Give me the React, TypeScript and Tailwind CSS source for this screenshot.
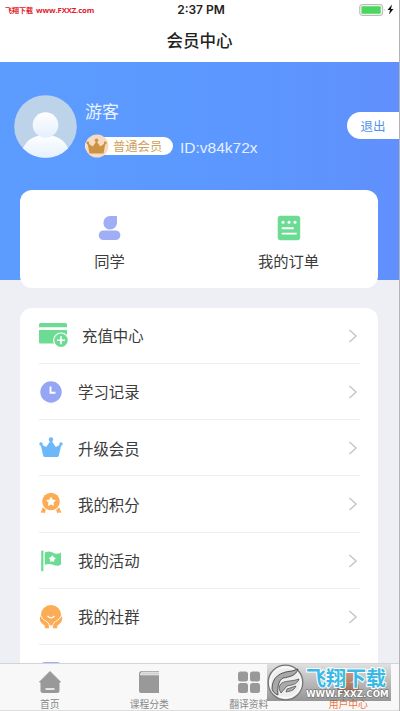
import type { ReactNode } from 'react';

interface MenuItem {
  label: string;
  icon: ReactNode;
  wide?: boolean;
}

interface Tab {
  label: string;
  icon: ReactNode;
  active?: boolean;
}

const menuItems: MenuItem[] = [
  {
    label: '充值中心',
    wide: true,
    icon: (
      <svg className="-mt-[2px]" width="30" height="26" viewBox="0 0 30 26">
        <path d="M1.5 1H26.500a1.500 1.500 0 0 1 1.500 1.500V5.200H0V2.500A1.500 1.500 0 0 1 1.500 1Z" fill="#6cdc94" />
        <path d="M0 8H28V20a1.500 1.500 0 0 1-1.500 1.500H1.500A1.500 1.500 0 0 1 0 20Z" fill="#6cdc94" />
        <circle cx="22" cy="18.300" r="7.900" fill="#fff" />
        <circle cx="22" cy="18.300" r="6.700" fill="#6cdc94" />
        <path d="M22 14.300V22.300M18 18.300H26" stroke="#fff" strokeWidth="1.600" />
      </svg>
    ),
  },
  {
    label: '学习记录',
    icon: (
      <svg width="24" height="24" viewBox="0 0 24 24">
        <circle cx="12" cy="12" r="10.700" fill="#94a6f4" />
        <path d="M11.500 6.500V12.700H16.500" fill="none" stroke="#fff" strokeWidth="1.900" />
      </svg>
    ),
  },
  {
    label: '升级会员',
    icon: (
      <svg width="24" height="24" viewBox="0 0 24 24" fill="#6cb8fb">
        <path d="M1.500 8 7.200 11 12 4 16.800 11 22.500 8 19.800 19.800Q19.500 21 18 21H6Q4.500 21 4.200 19.800Z" />
        <circle cx="12" cy="3.500" r="2.200" />
        <circle cx="2" cy="8" r="1.700" />
        <circle cx="22" cy="8" r="1.700" />
      </svg>
    ),
  },
  {
    label: '我的积分',
    icon: (
      <svg width="24" height="24" viewBox="0 0 24 24">
        <circle cx="12" cy="9.500" r="8.800" fill="#fbac55" />
        <path d="m12 4.700 1.600 2.900 3.300.6-2.300 2.400.4 3.300-3-1.400-3 1.400.4-3.300-2.300-2.400 3.300-.6Z" fill="#fff" />
        <path d="M3.800 15.200 6.900 18 5.600 21.600 4.300 20.400 1.600 20.800ZM20.200 15.200 17.100 18 18.400 21.600 19.700 20.400 22.400 20.800Z" fill="#fbac55" />
      </svg>
    ),
  },
  {
    label: '我的活动',
    icon: (
      <svg width="24" height="24" viewBox="0 0 24 24">
        <path d="M2.200 1.600H4.400V22.200H2.200Z" fill="#6cdc94" />
        <path d="M5.800 3.600C10 1.500 12.500 3 15 4.200 17.500 5.200 20 4.600 22 3.400V15.600C19 17.600 16.500 16.800 14 15.700 11 14.600 8.500 14.700 5.800 16Z" fill="#6cdc94" />
        <path d="m13.500 6.300 1.200 1.900 2.100.9-1.600 1.600v2.200l-2-.6-2.200.5.200-2.200-1.300-1.700 2.100-.8Z" fill="#fff" />
      </svg>
    ),
  },
  {
    label: '我的社群',
    icon: (
      <svg className="shrink-0" width="26" height="26" viewBox="0 0 26 26">
        <circle cx="13" cy="11.300" r="10.200" fill="#fbac55" />
        <path
          d="M3.500 11.500C1 13 1.500 16.500 3.500 19L6.800 21.700V24.200H11.300V21C11.300 18.500 8.500 16.500 6.500 15.500ZM22.500 11.500C25 13 24.500 16.500 22.500 19L19.200 21.700V24.200H14.700V21C14.700 18.500 17.500 16.500 19.500 15.500Z"
          fill="#fbac55"
        />
        <path d="M2.800 11.300C3.500 14.500 6 16 8.500 17.500 10.800 19 11.600 21 11.500 24.500M23.200 11.300C22.500 14.500 20 16 17.500 17.500 15.200 19 14.400 21 14.500 24.500" fill="none" stroke="#fff" strokeWidth=".9" />
        <path d="M9.500 12Q13 15.800 16.500 12" fill="none" stroke="#fff" strokeWidth="1.300" />
      </svg>
    ),
  },
];

const tabs: Tab[] = [
  {
    label: '首页',
    icon: (
      <svg width="24" height="24" viewBox="0 0 24 24">
        <path d="M12 1.500 22.500 12H21V21Q21 22.500 19.500 22.500H4.500Q3 22.500 3 21V12H1.500Z" fill="#999" stroke="#999" strokeLinejoin="round" />
        <path d="M7.500 19H16.500" stroke="#f8f8f8" strokeWidth="1.600" />
      </svg>
    ),
  },
  {
    label: '课程分类',
    icon: (
      <svg width="24" height="24" viewBox="0 0 24 24">
        <path d="M5 1H22V23H4Q2 23 2 21V4Q2 1 5 1Z" fill="#999" />
        <path d="M22 2.200H5.500Q3.500 2.500 3.500 4.800H22" fill="#d0d0d0" stroke="#f8f8f8" strokeWidth=".8" />
      </svg>
    ),
  },
  {
    label: '翻译资料',
    icon: (
      <svg width="24" height="24" viewBox="0 0 24 24" fill="#999">
        <rect x="1" y="1.500" width="10" height="10" rx="2.500" />
        <rect x="13" y="1.500" width="10" height="10" rx="2.500" />
        <rect x="1" y="13" width="10" height="10" rx="2.500" />
        <rect x="13" y="13" width="10" height="10" rx="2.500" />
      </svg>
    ),
  },
  {
    label: '用户中心',
    active: true,
    icon: (
      <svg width="24" height="24" viewBox="0 0 24 24" fill="#f06a30">
        <path d="M12 1H18V7.500A6 6 0 1 1 12 1Z" />
        <rect x="1" y="13" width="22" height="10" rx="4" />
      </svg>
    ),
  },
];

function StatusBar() {
  return (
    <div className="flex h-5 items-center justify-between pr-1 pl-[5px]">
      <div className="flex w-[150px] items-center gap-[3px] leading-5 font-bold whitespace-nowrap text-[#df2027]">
        <span className="text-[7px]">飞翔下载</span>
        <span className="text-[7.700px] tracking-[-0.100px] font-['Open_Sans']">www.FXXZ.com</span>
      </div>
      <span className="pl-[2px] font-['Inter'] text-[12px] font-semibold text-[#222]">2:37 PM</span>
      <div className="flex w-[150px] items-center justify-end">
        <svg width="36" height="13" viewBox="0 0 36 13">
          <rect x=".7" y="0.500" width="23" height="11" rx="2.500" fill="#e9f5e9" stroke="#aaa" strokeWidth=".8" />
          <rect x="2.500" y="2.200" width="19.200" height="7.500" rx="1" fill="#4cd55f" />
          <path d="M25 4.500v3q1.200-1.500 0-3" fill="#aaa" />
          <path d="M33 .5 28.500 6H31L30 10.500 34.500 5H32Z" fill="#111" />
        </svg>
      </div>
    </div>
  );
}

function Profile() {
  return (
    <div className="flex pt-[33px] pl-[14px]">
      <svg width="63" height="63" viewBox="0 0 63 63">
        <defs>
          <clipPath id="avatar">
            <circle cx="31.500" cy="31.500" r="31.300" />
          </clipPath>
          <linearGradient id="person" x1="0" y1="0" x2="0" y2="1">
            <stop offset="0" stopColor="#fff" />
            <stop offset="1" stopColor="#e3effd" />
          </linearGradient>
        </defs>
        <g clipPath="url(#avatar)">
          <rect width="63" height="63" fill="#bdd3e9" />
          <path d="M31.500 40C43 40 50 45 54 53V64H9V53C13 45 20 40 31.500 40Z" fill="url(#person)" />
          <circle cx="31.500" cy="30" r="12.800" fill="url(#person)" />
        </g>
      </svg>
      <div className="ml-2 flex flex-col pt-1">
        <span className="text-[17px] leading-6 text-[#eaf3ff]">游客</span>
        <div className="mt-[11px] flex h-6 items-center">
          <div className="flex h-[18px] w-[88px] items-center rounded-full bg-white">
            <svg className="shrink-0" width="24" height="24" viewBox="0 0 24 24">
              <circle cx="12" cy="12" r="11.500" fill="#f8dcc2" />
              <path d="M2.500 9 7.800 12.500 11.500 7 15.200 12.500 20.500 9 18.500 19.500H4.500Z" fill="#ca9344" />
              <circle cx="11.500" cy="6.200" r="1.800" fill="#ca9344" />
              <circle cx="2.800" cy="9" r="1.400" fill="#ca9344" />
              <circle cx="20.200" cy="9" r="1.400" fill="#ca9344" />
            </svg>
            <span className="ml-[4px] text-[12.300px] leading-[19px] whitespace-nowrap text-[#cfa05e]">普通会员</span>
          </div>
          <span className="mt-[3px] ml-[7px] font-['Liberation_Sans'] text-[15.500px] text-[#e6f1ff]">ID:v84k72x</span>
        </div>
      </div>
      <button className="mt-[17px] ml-auto h-[27px] w-[52px] rounded-l-full bg-white text-[12.500px] leading-[27px] text-[#5292ea]">
        退出
      </button>
    </div>
  );
}

function Watermark() {
  return (
    <div className="absolute top-0 left-[267px] flex h-[37px] w-[124px] items-start bg-linear-to-b from-[#d0d0d099] to-[#55555599]">
      <svg className="shrink-0" width="37" height="37" viewBox="0 0 37 37">
        <circle cx="18.500" cy="18.500" r="17.300" fill="#eee" stroke="#777" strokeWidth="1.300" />
        <circle cx="18.500" cy="18.500" r="15.300" fill="none" stroke="#fff" />
        <path d="M5 25C5 13 13 8 25 7L31 5C29 12 22 13 16 14 12 16 10 23 11 31 8 30 6 28 5 25Z" fill="#a8a8a8" stroke="#555" />
        <path d="M13 21C16 16 24 18 32 15 30 21 24 21 20 22L14 29C12 26 12 23 13 21ZM20 25 29 22C27 27 23 27 19 28Z" fill="#aaa" stroke="#555" strokeWidth=".8" />
      </svg>
      <div className="flex flex-col pt-[3px]">
        <span className="ml-[2px] text-[20px] leading-[22px] font-bold whitespace-nowrap text-[#39b9e5] [-webkit-text-stroke:2px_white] [paint-order:stroke_fill]">
          飞翔下载
        </span>
        <span className="mt-px ml-[2px] font-['DejaVu_Sans'] text-[8.700px] leading-[9px] font-bold whitespace-nowrap text-white [-webkit-text-stroke:1px_#666] [paint-order:stroke_fill]">
          WWW.FXXZ.COM
        </span>
      </div>
    </div>
  );
}

export default function App() {
  return (
    <div className="flex h-[711px] w-[400px] flex-col overflow-hidden border-r border-[#b4b4b8] bg-[#eeeff4] font-['Noto_Sans_CJK_SC',sans-serif]">
      <header className="h-[62px] shrink-0 bg-white">
        <StatusBar />
        <h1 className="text-center text-[16.500px] leading-10 font-medium text-[#222]">会员中心</h1>
      </header>

      <main className="flex min-h-0 flex-1 flex-col">
        <section className="h-[218px] shrink-0 bg-linear-to-r from-[#5c9cff] via-[#5b98ff] to-[#6090fd]">
          <Profile />
        </section>

        <section className="-mt-[90px] mr-[21px] ml-5 grid h-[98px] shrink-0 grid-cols-2 rounded-xl bg-white">
          <div className="flex flex-col items-center pt-[25px]">
            <svg width="26" height="26" viewBox="0 0 26 26" fill="#a0aff5">
              <path d="M13 1H20V7.800A6.800 6.800 0 1 1 13 1Z" />
              <rect x="1.800" y="15.500" width="21.500" height="9.600" rx="4.600" />
            </svg>
            <span className="mt-[7px] text-[15.300px] leading-6 text-[#3c3c3c]">同学</span>
          </div>
          <div className="flex flex-col items-center pt-[25px]">
            <svg width="26" height="26" viewBox="0 0 26 26">
              <rect x="1.700" y=".7" width="22.500" height="24.600" rx="3" fill="#6cdc94" />
              <g fill="#fff">
                <circle cx="7" cy="7.200" r="1.500" />
                <circle cx="13" cy="7.200" r="1.500" />
                <circle cx="19" cy="7.200" r="1.500" />
              </g>
              <path d="M6.500 13.200H17M6.500 18.600H20" stroke="#fff" strokeWidth="1.900" strokeLinecap="round" />
            </svg>
            <span className="mt-[7px] text-[15.300px] leading-6 text-[#3c3c3c]">我的订单</span>
          </div>
        </section>

        <section className="mt-[19.500px] mr-[21px] ml-5 min-h-0 flex-1 overflow-hidden rounded-t-xl bg-white pt-[0.400px] pr-[18px] pl-[19px]">
          {menuItems.map(({ label, icon, wide }) => (
            <div key={label} className="flex h-[56.200px] items-center border-b border-[#ededf0] pt-[0.600px]">
              <span className={wide ? 'flex w-[43px]' : 'flex w-[39px]'}>
                <span className={wide ? 'flex' : 'flex w-6 justify-center'}>{icon}</span>
              </span>
              <span className="text-[15.400px] text-[#3c3c3c]">{label}</span>
              <svg className="mr-[2px] ml-auto" width="10" height="16" viewBox="0 0 10 16">
                <path d="M1.500 2 8 8 1.500 14" fill="none" stroke="#c8c8cc" strokeWidth="1.600" />
              </svg>
            </div>
          ))}
          <div className="mt-[17px] ml-[2px] h-6 w-5 rounded-sm bg-[#a0aff5]" />
        </section>
      </main>

      <nav className="relative grid h-12 shrink-0 grid-cols-4 border-t border-b border-t-[#d4d4d6] border-b-[#dedede] bg-[#f8f8f8] pr-px">
        {tabs.map(({ label, icon, active }) => (
          <div key={label} className="flex flex-col items-center pt-[6px]">
            {icon}
            <span
              className={`mt-[3px] text-[9.800px] leading-[15px] ${active ? 'text-[#ef7540]' : 'text-[#888]'}`}
            >
              {label}
            </span>
          </div>
        ))}
        <Watermark />
      </nav>
    </div>
  );
}
